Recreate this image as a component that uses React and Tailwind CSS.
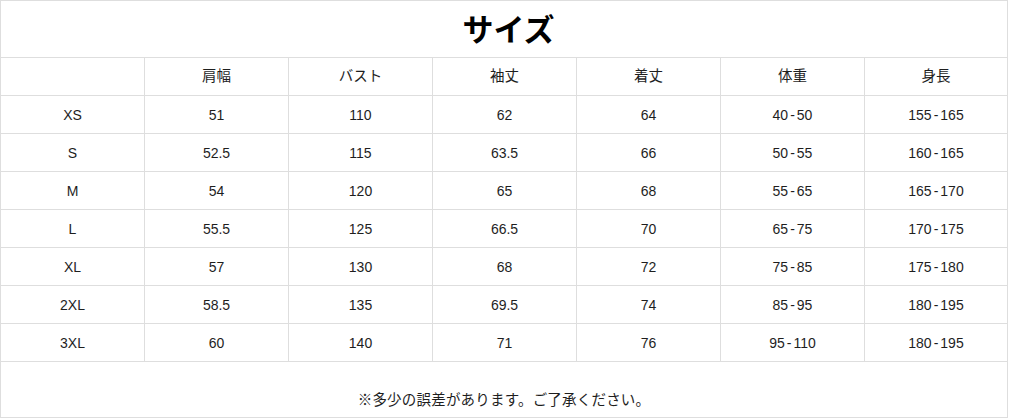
import React from "react";

const headers = ["", "肩幅", "バスト", "袖丈", "着丈", "体重", "身長"];
const rows = [
  ["XS", "51", "110", "62", "64", "40-50", "155-165"],
  ["S", "52.5", "115", "63.5", "66", "50-55", "160-165"],
  ["M", "54", "120", "65", "68", "55-65", "165-170"],
  ["L", "55.5", "125", "66.5", "70", "65-75", "170-175"],
  ["XL", "57", "130", "68", "72", "75-85", "175-180"],
  ["2XL", "58.5", "135", "69.5", "74", "85-95", "180-195"],
  ["3XL", "60", "140", "71", "76", "95-110", "180-195"],
];

function Cell({ text }) {
  const parts = text.split("-");
  if (parts.length === 1) return <span>{text}</span>;
  return (
    <span>
      {parts[0]}
      <span className="mx-[2px]">-</span>
      {parts[1]}
    </span>
  );
}

export default function App() {
  return (
    <div
      className="w-[1009px] h-[419px] bg-white text-[#1e1e1e]"
      style={{ fontFamily: '"Liberation Sans", "Noto Sans CJK JP", sans-serif' }}
    >
      <div className="w-[1008px] border-l border-t border-[#dedede] grid grid-cols-[144px_144px_144px_144px_144px_144px_143px]">
        <div className="col-span-7 h-[57px] border-r border-b border-[#dedede] flex items-center justify-center pl-[9px]">
          <span className="text-[31px] font-bold text-black leading-none pt-[2px]">サイズ</span>
        </div>
        {headers.map((h, i) => (
          <div
            key={"h" + i}
            className="h-[38px] border-r border-b border-[#dedede] flex items-center justify-center text-[14.5px] pt-[1px]"
          >
            {h}
          </div>
        ))}
        {rows.map((r, ri) =>
          r.map((c, ci) => (
            <div
              key={ri + "-" + ci}
              className="h-[38px] border-r border-b border-[#dedede] flex items-center justify-center text-[14px] pt-[2px]"
            >
              <Cell text={c} />
            </div>
          ))
        )}
        <div className="col-span-7 h-[56px] border-r border-b border-[#dedede] flex items-end justify-center pb-[5px] text-[14.5px] tracking-[0.2px]">
          ※多少の誤差があります。ご了承ください。
        </div>
      </div>
    </div>
  );
}
